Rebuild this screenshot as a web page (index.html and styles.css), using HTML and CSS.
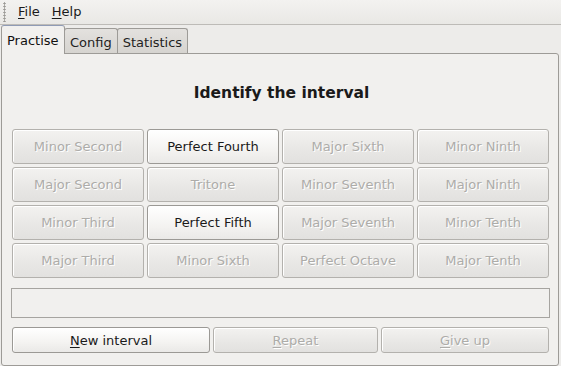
FILE: index.html
```html
<!DOCTYPE html>
<html lang="en">

<head>
  <meta charset="UTF-8">
  <meta name="viewport" content="width=device-width, initial-scale=1.0">
  <title>Interval trainer</title>
  <link rel="stylesheet" href="styles.css">
</head>

<body>
  <div class="menubar">
    <span class="grip"></span>
    <span class="menu"><u>F</u>ile</span>
    <span class="menu"><u>H</u>elp</span>
  </div>

  <div class="tabs">
    <div class="tab active">Practise</div>
    <div class="tab">Config</div>
    <div class="tab">Statistics</div>
  </div>

  <div class="panel">
    <h1 class="title">Identify the interval</h1>

    <div class="intervals">
      <button class="btn" disabled>Minor Second</button>
      <button class="btn">Perfect Fourth</button>
      <button class="btn" disabled>Major Sixth</button>
      <button class="btn" disabled>Minor Ninth</button>
      <button class="btn" disabled>Major Second</button>
      <button class="btn" disabled>Tritone</button>
      <button class="btn" disabled>Minor Seventh</button>
      <button class="btn" disabled>Major Ninth</button>
      <button class="btn" disabled>Minor Third</button>
      <button class="btn">Perfect Fifth</button>
      <button class="btn" disabled>Major Seventh</button>
      <button class="btn" disabled>Minor Tenth</button>
      <button class="btn" disabled>Major Third</button>
      <button class="btn" disabled>Minor Sixth</button>
      <button class="btn" disabled>Perfect Octave</button>
      <button class="btn" disabled>Major Tenth</button>
    </div>

    <div class="status"></div>

    <div class="actions">
      <button class="btn"><u>N</u>ew interval</button>
      <button class="btn" disabled><u>R</u>epeat</button>
      <button class="btn" disabled><u>G</u>ive up</button>
    </div>
  </div>
</body>

</html>
```

FILE: styles.css
```css
* {
  margin: 0;
  padding: 0;
  box-sizing: border-box;
  font-family: "DejaVu Sans", Verdana, sans-serif;
}

body {
  background: #edecea;
  color: #1a1a1a;
  font-size: 13px;
  width: 561px;
  height: 366px;
  overflow: hidden;
}

.menubar {
  display: flex;
  align-items: center;
  height: 25px;
  border-bottom: 1px solid #bdbbb7;
  background: linear-gradient(#f3f2f0, #e9e8e5);
}

.grip {
  width: 3px;
  height: 20px;
  margin: 0 5px 0 3px;
  background-image: radial-gradient(circle, #9a9894 45%, transparent 55%);
  background-size: 3px 3px;
}

.menu {
  padding: 0 7px;
  line-height: 24px;
}

.menu + .menu {
  padding-left: 5px;
}

.menu u {
  text-decoration-thickness: 1px;
  text-underline-offset: 2px;
}

.tabs {
  display: flex;
  align-items: flex-end;
  height: 28px;
  padding-left: 1px;
  position: relative;
  z-index: 1;
}

.tab {
  height: 25px;
  line-height: 27px;
  padding: 0 5px;
  background: linear-gradient(#e3e1de, #d6d4d0);
  border: 1px solid #9d9b97;
  border-bottom: 0;
  border-radius: 3px 3px 0 0;
  color: #222;
}

.tab + .tab {
  margin-left: -1px;
}

.tab.active {
  height: 29px;
  line-height: 30px;
  padding: 0 4px 0 5px;
  margin-bottom: -1px;
  background: #f1f0ee;
  border-top-color: #8f9bb5;
  color: #111;
  width: 64px;
}

.panel {
  margin: 0 2px 0 1px;
  height: 313px;
  border: 1px solid #9d9b97;
  border-radius: 0 3px 3px 3px;
  background: #f1f0ee;
  padding: 0 8px 0 9px;
}

.title {
  font-size: 15.5px;
  font-weight: bold;
  text-align: center;
  line-height: 20px;
  padding-top: 29px;
  margin-bottom: 26px;
  margin-left: 2px;
}

.intervals {
  display: grid;
  grid-template-columns: repeat(4, 132px);
  grid-auto-rows: 35px;
  gap: 3px;
  margin-left: 1px;
}

.btn {
  font-size: 13px;
  border: 1px solid #9b9995;
  border-radius: 3px;
  background: linear-gradient(#ffffff, #f4f3f1 60%, #eae9e7);
  color: #1a1a1a;
  box-shadow: inset 1px 1px 0 #fff;
}

.btn:disabled {
  background: linear-gradient(#f3f2f0, #e8e7e5 60%, #e2e1df);
  border-color: #b3b1ad;
  color: #adaca9;
  text-shadow: 1px 1px 0 #fff;
}

.btn u {
  text-underline-offset: 2px;
}

.status {
  height: 30px;
  margin-top: 10px;
  border: 1px solid #a6a4a0;
  background: #f1f0ee;
  width: 539px;
}

.actions {
  display: grid;
  grid-template-columns: 198px 165px 168px;
  gap: 3px;
  height: 26px;
  margin-top: 9px;
  margin-left: 1px;
}
```
